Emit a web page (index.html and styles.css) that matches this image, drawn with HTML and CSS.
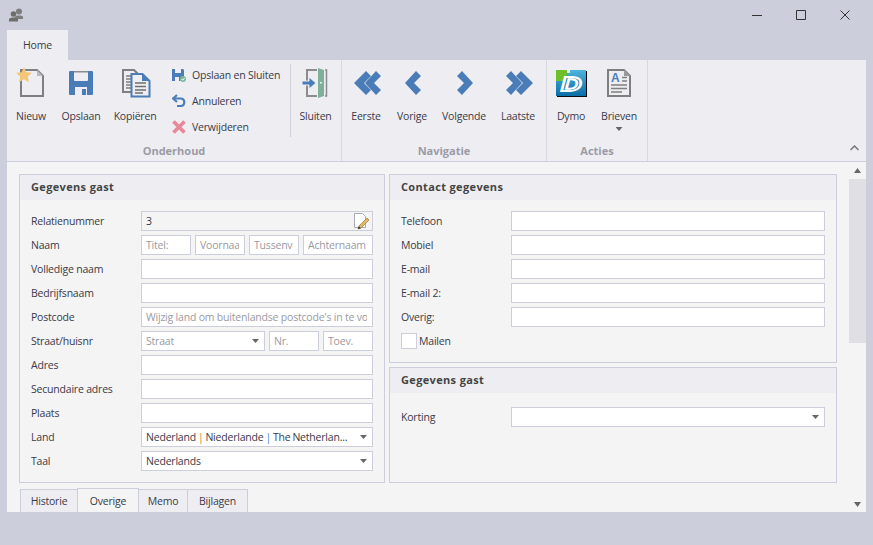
FILE: index.html
```html
<!DOCTYPE html>
<html lang="en">
<head>
  <meta charset="UTF-8" />
  <title>Gegevens gast</title>
  <link rel="stylesheet" href="styles.css">
</head>
<body>
<div class="window">

  <div class="titlebar">
    <svg class="app-icon" width="16" height="16" viewBox="0 0 16 16">
      <circle cx="11" cy="4.5" r="3" fill="#7d7d7d"/>
      <path d="M7 9.5c1-1.500 7-1.500 8 0v2.500H7z" fill="#7d7d7d"/>
      <circle cx="5.500" cy="7" r="2.800" fill="#6e6e6e"/>
      <path d="M1 12c1-2 8-2 9 0v2.500H1z" fill="#6e6e6e"/>
    </svg>
    <div class="win-controls">
      <button class="win-btn"><svg width="12" height="12" viewBox="0 0 12 12"><path d="M1 6.500h10" stroke="#333" fill="none"/></svg></button>
      <button class="win-btn"><svg width="12" height="12" viewBox="0 0 12 12"><path d="M1.500 1.500h9v9h-9z" stroke="#333" fill="none"/></svg></button>
      <button class="win-btn"><svg width="12" height="12" viewBox="0 0 12 12"><path d="M1.500 1.500l9 9M10.500 1.500l-9 9" stroke="#333" fill="none"/></svg></button>
    </div>
  </div>

  <div class="tabstrip">
    <div class="ribbon-tab">Home</div>
  </div>

  <div class="ribbon">
    <div class="group group-onderhoud">
      <div class="group-items">
        <div class="big-btn w48">
          <svg class="big-icon" width="32" height="32" viewBox="0 0 32 32">
            <path d="M6 3h16l6 6v20H6z" fill="#eeeef2" stroke="#7f7f7f" stroke-width="2"/>
            <path d="M22 3v6h6z" fill="#b9b9bf"/>
            <path d="M9 0l2.400 5.200 5.600.6-4.200 3.800 1.200 5.600-5-2.900-5 2.900 1.200-5.600L1 5.800l5.600-.6z" fill="#f3c777"/>
          </svg>
          <span>Nieuw</span>
        </div>
        <div class="big-btn w52">
          <svg class="big-icon" width="32" height="32" viewBox="0 0 32 32">
            <path d="M5 4h22a1 1 0 0 1 1 1v22a1 1 0 0 1-1 1H5a1 1 0 0 1-1-1V5a1 1 0 0 1 1-1z" fill="#4a7db8"/>
            <path d="M9 4h14v9a1 1 0 0 1-1 1H10a1 1 0 0 1-1-1z" fill="#eeeef2"/>
            <path d="M9 4h14v1.500H9z" fill="#8c8c8c"/>
            <path d="M10 20h12v8H10z" fill="#eeeef2"/>
            <path d="M17 22h4v6h-4z" fill="#4a7db8"/>
          </svg>
          <span>Opslaan</span>
        </div>
        <div class="big-btn w56">
          <svg class="big-icon" width="32" height="32" viewBox="0 0 32 32">
            <path d="M4 3h11l4 4v18H4z" fill="#eeeef2" stroke="#7f7f7f" stroke-width="2"/>
            <path d="M7 9h6M7 12h6M7 15h6M7 18h6M7 21h6" stroke="#7f7f7f" stroke-width="1.400"/>
            <path d="M12.500 7h11l7 7v15.500h-18z" fill="#eeeef2" stroke="#4a7db8" stroke-width="2"/>
            <path d="M23 6.500V14h7.500z" fill="#4a7db8"/>
            <path d="M16 16h11M16 19.500h11M16 23h11M16 26h8" stroke="#6f6f6f" stroke-width="1.500"/>
          </svg>
          <span>Kopiëren</span>
        </div>
        <div class="small-col">
          <div class="small-btn">
            <svg width="14" height="14" viewBox="0 0 14 14">
              <path d="M0 1h11l1 1v6.500L8 13H0z" fill="#4a7db8"/>
              <path d="M3 1h6v4H3zM3 9h4v4H3z" fill="#eeeef2"/>
              <circle cx="11" cy="11" r="3" fill="#7fb59b"/>
              <path d="M9.500 11l1.200 1.200 1.800-2" stroke="#fff" fill="none"/>
            </svg>
            <span>Opslaan en Sluiten</span>
          </div>
          <div class="small-btn">
            <svg width="14" height="14" viewBox="0 0 14 14">
              <path d="M5 1L1 4.500 5 8" fill="none" stroke="#4a7db8" stroke-width="2.200"/>
              <path d="M2 4.500h6.500c5 0 5 7.500 0 7.500H5" fill="none" stroke="#4a7db8" stroke-width="2.200"/>
            </svg>
            <span>Annuleren</span>
          </div>
          <div class="small-btn">
            <svg width="14" height="14" viewBox="0 0 14 14">
              <path d="M1.500 1.500l11 11M12.500 1.500l-11 11" stroke="#e8899b" stroke-width="3.800" fill="none"/>
            </svg>
            <span>Verwijderen</span>
          </div>
        </div>
        <div class="group-sep"></div>
        <div class="big-btn w49">
          <svg class="big-icon" width="32" height="32" viewBox="0 0 32 32">
            <path d="M17 3H7v26h10" fill="none" stroke="#8c8c8c" stroke-width="2"/>
            <path d="M25 3h1.500v26H25" fill="none" stroke="#8c8c8c" stroke-width="1.500"/>
            <path d="M18 1l6 2v26l-6 2z" fill="#7eb09a"/>
            <path d="M20 15h2v1.500h-2z" fill="#eeeef2"/>
            <path d="M2 14h7v-4l7 6-7 6v-4H2z" fill="#4a7db8" stroke="#eeeef2"/>
          </svg>
          <span>Sluiten</span>
        </div>
      </div>
      <div class="group-label">Onderhoud</div>
    </div>

    <div class="group group-navigatie">
      <div class="group-items">
        <div class="big-btn w48">
          <svg class="big-icon" width="32" height="32" viewBox="0 0 32 32">
            <path d="M4 16L16 4l5 5-7 7 7 7-5 5z" fill="#4a7db8"/>
            <path d="M15 16L26 4l5 5-7 7 7 7-5 5z" fill="#4a7db8"/>
          </svg>
          <span>Eerste</span>
        </div>
        <div class="big-btn w44">
          <svg class="big-icon" width="32" height="32" viewBox="0 0 32 32">
            <path d="M9 16L20 4l5 5-7 7 7 7-5 5z" fill="#4a7db8"/>
          </svg>
          <span>Vorige</span>
        </div>
        <div class="big-btn w60">
          <svg class="big-icon" width="32" height="32" viewBox="0 0 32 32">
            <path d="M25 16L14 4 9 9l7 7-7 7 5 5z" fill="#4a7db8"/>
          </svg>
          <span>Volgende</span>
        </div>
        <div class="big-btn w48">
          <svg class="big-icon" width="32" height="32" viewBox="0 0 32 32">
            <path d="M20 16L9 4 4 9l7 7-7 7 5 5z" fill="#4a7db8"/>
            <path d="M31 16L19 4l-5 5 7 7-7 7 5 5z" fill="#4a7db8"/>
          </svg>
          <span>Laatste</span>
        </div>
      </div>
      <div class="group-label">Navigatie</div>
    </div>

    <div class="group group-acties">
      <div class="group-items">
        <div class="big-btn w48">
          <svg class="big-icon" width="32" height="32" viewBox="0 0 32 32">
            <defs>
              <linearGradient id="dymoBlue" x1="0" y1="0" x2="0" y2="1">
                <stop offset="0" stop-color="#4db4dc"/>
                <stop offset="1" stop-color="#0a6ea8"/>
              </linearGradient>
            </defs>
            <path d="M2 4h30v26H2z" fill="#0b0b0b"/>
            <path d="M1 3h30v26H1z" fill="url(#dymoBlue)"/>
            <path d="M1 3h11v11H1z" fill="#6fbf2a"/>
            <path d="M12 3h3v3h-3z" fill="#eeeef2"/>
            <text class="dymo-d" transform="translate(16 24) scale(1.350 .95)">D</text>
          </svg>
          <span>Dymo</span>
        </div>
        <div class="big-btn w48">
          <svg class="big-icon" width="32" height="32" viewBox="0 0 32 32">
            <path d="M5 3h16l6 6v20H5z" fill="#eeeef2" stroke="#7f7f7f" stroke-width="2"/>
            <path d="M21 2.500V9h6.500z" fill="#9a9a9a"/>
            <text class="brief-a" x="8" y="15">A</text>
            <path d="M19 10.500h5M19 14h5M8 18h16M8 21.500h16M8 25h11" stroke="#7f7f7f" stroke-width="1.500"/>
          </svg>
          <span>Brieven</span>
          <i class="caret caret-brieven"></i>
        </div>
      </div>
      <div class="group-label">Acties</div>
    </div>

    <svg class="ribbon-collapse" width="9" height="6" viewBox="0 0 9 6">
      <path d="M.5 5L4.500 1l4 4" fill="none" stroke="#777" stroke-width="1.500"/>
    </svg>
  </div>

  <div class="content">
    <div class="main">
      <div class="panels">
        <div class="panel panel-gast">
          <div class="panel-head">Gegevens gast</div>
          <div class="form">
            <label>Relatienummer</label>
            <div class="field-icon">
              <input class="readonly" type="text" value="3" readonly>
              <svg class="edit-icon" width="16" height="17" viewBox="0 0 16 17">
                <path d="M.5.500h8l3 3v11H.5z" fill="#fff" stroke="#a9a9b5"/>
                <path d="M5 13l8-8 2 2-8 8-3 1z" fill="#e3b765" stroke="#8c6a2a" stroke-width=".6"/>
                <path d="M4 16l.8-2.800 2 2z" fill="#333"/>
              </svg>
            </div>
            <label>Naam</label>
            <div class="row-naam">
              <input type="text" placeholder="Titel:">
              <input type="text" placeholder="Voornaam">
              <input type="text" placeholder="Tussenvoegsel">
              <input type="text" placeholder="Achternaam">
            </div>
            <label>Volledige naam</label>
            <input type="text">
            <label>Bedrijfsnaam</label>
            <input type="text">
            <label>Postcode</label>
            <input type="text" placeholder="Wijzig land om buitenlandse postcode's in te voeren">
            <label>Straat/huisnr</label>
            <div class="row-straat">
              <div class="combo placeholder"><span class="combo-text">Straat</span><i class="caret"></i></div>
              <input type="text" placeholder="Nr.">
              <input type="text" placeholder="Toev.">
            </div>
            <label>Adres</label>
            <input type="text">
            <label>Secundaire adres</label>
            <input type="text">
            <label>Plaats</label>
            <input type="text">
            <label>Land</label>
            <div class="combo"><span class="combo-text">Nederland <b class="pipe-a">|</b> Niederlande <b class="pipe-b">|</b> The Netherlan...</span><i class="caret"></i></div>
            <label>Taal</label>
            <div class="combo"><span class="combo-text">Nederlands</span><i class="caret"></i></div>
          </div>
        </div>

        <div class="right-col">
          <div class="panel panel-contact">
            <div class="panel-head">Contact gegevens</div>
            <div class="form">
              <label>Telefoon</label>
              <input type="text">
              <label>Mobiel</label>
              <input type="text">
              <label>E-mail</label>
              <input type="text">
              <label>E-mail 2:</label>
              <input type="text">
              <label>Overig:</label>
              <input type="text">
              <div class="check-row"><i class="check"></i><span>Mailen</span></div>
            </div>
          </div>
          <div class="panel panel-korting">
            <div class="panel-head">Gegevens gast</div>
            <div class="form form-korting">
              <label>Korting</label>
              <div class="combo"><span class="combo-text"></span><i class="caret"></i></div>
            </div>
          </div>
        </div>
      </div>

      <div class="tabs">
        <div class="tab">Historie</div>
        <div class="tab active">Overige</div>
        <div class="tab">Memo</div>
        <div class="tab">Bijlagen</div>
      </div>
    </div>

    <div class="scrollbar">
      <i class="arrow-up"></i>
      <div class="thumb"></div>
      <i class="arrow-down"></i>
    </div>
  </div>

</div>
</body>
</html>
```

FILE: styles.css
```css
* {
  box-sizing: border-box;
}

body {
  margin: 0;
  font-family: "Open Sans", "Noto Sans", sans-serif;
  font-size: 10.5px;
  letter-spacing: -0.2px;
  color: #3a3a48;
}

.window {
  width: 873px;
  height: 545px;
  background-color: #cccedb;
  padding: 0 7px;
  overflow: hidden;
}

.titlebar {
  height: 30px;
  display: flex;
  align-items: center;
  justify-content: space-between;
  margin-right: -1px;
  padding-left: 1px;
  padding-bottom: 1px;
}

.app-icon {
  display: block;
}

.win-controls {
  display: flex;
}

.win-btn {
  width: 44px;
  height: 30px;
  padding: 0;
  background: none;
  border: none;
  display: flex;
  align-items: center;
  justify-content: center;
}

.tabstrip {
  height: 30px;
  display: flex;
}

.ribbon-tab {
  width: 61px;
  background-color: #eeeef2;
  text-align: center;
  line-height: 30px;
}

.ribbon {
  position: relative;
  height: 102px;
  background-color: #eeeef2;
  border-bottom: 1px solid #cccedb;
  display: flex;
}

.group {
  display: flex;
  flex-direction: column;
  border-right: 1px solid #d7d8e2;
}

.group-onderhoud {
  width: 335px;
}

.group-navigatie {
  width: 205px;
}

.group-acties {
  width: 101px;
}

.group-items {
  height: 83px;
  display: flex;
}

.group-label {
  height: 18px;
  text-align: center;
  font-size: 11px;
  font-weight: bold;
  letter-spacing: 0;
  color: #9a9ba6;
  line-height: 16px;
}

.big-btn {
  position: relative;
  display: flex;
  flex-direction: column;
  align-items: center;
  padding-top: 7px;
  white-space: nowrap;
}

.big-icon {
  display: block;
  margin-bottom: 9px;
}

.big-btn span {
  line-height: 16px;
}

.w44 { width: 44px; }
.w48 { width: 48px; }
.w49 { width: 49px; }
.w52 { width: 52px; }
.w56 { width: 56px; }
.w60 { width: 60px; }

.small-col {
  width: 127px;
  padding-top: 2px;
  padding-left: 9px;
}

.small-btn {
  height: 26px;
  display: flex;
  align-items: center;
  gap: 6px;
  white-space: nowrap;
}

.group-sep {
  width: 1px;
  height: 73px;
  margin-top: 4px;
  background-color: #d0d1dc;
}

.ribbon-collapse {
  position: absolute;
  right: 7px;
  bottom: 10px;
}

.dymo-d {
  font-family: "Liberation Sans", sans-serif;
  font-size: 21px;
  font-weight: bold;
  font-style: italic;
  text-anchor: middle;
  fill: #1577b0;
  stroke: #fff;
  stroke-width: 2px;
}

.brief-a {
  font-family: "Liberation Sans", sans-serif;
  font-size: 12px;
  font-weight: bold;
  fill: #4a7db8;
}

.caret {
  display: block;
  flex: none;
  width: 7px;
  height: 4px;
  background-color: #666;
  clip-path: polygon(0 0, 100% 0, 50% 100%);
}

.caret-brieven {
  margin-top: 3px;
}

.content {
  height: 350px;
  background-color: #f4f4f4;
  display: flex;
  overflow: hidden;
}

.main {
  width: 842px;
  padding: 12px 11px 0 12px;
}

.panels {
  display: grid;
  grid-template-columns: 366px 448px;
  gap: 4px;
}

.panel {
  border: 1px solid #cccedb;
}

.panel-gast {
  height: 309px;
}

.right-col {
  display: flex;
  flex-direction: column;
  gap: 4px;
}

.panel-contact {
  height: 189px;
}

.panel-korting {
  height: 116px;
}

.panel-head {
  height: 25px;
  background-color: #eeeef2;
  padding-left: 11px;
  font-size: 11px;
  font-weight: bold;
  letter-spacing: 0.35px;
  line-height: 24px;
  color: #444;
}

.form {
  display: grid;
  grid-template-columns: 110px 1fr;
  grid-auto-rows: 20px;
  row-gap: 4px;
  padding: 11px 11px 0;
  align-items: center;
}

.form-korting {
  padding-top: 14px;
}

.form label {
  white-space: nowrap;
}

input,
.combo {
  width: 100%;
  height: 20px;
  min-width: 0;
  background-color: #fff;
  border: 1px solid #cccedb;
  border-radius: 0;
  padding: 0 5px 0 4px;
  margin: 0;
  font-family: inherit;
  font-size: 10.5px;
  letter-spacing: -0.2px;
  color: #3a3a48;
  outline: none;
}

input::placeholder,
.placeholder {
  color: #9a9a9f;
  opacity: 1;
}

input.readonly {
  background-color: #f4f4f4;
}

.field-icon {
  position: relative;
}

.edit-icon {
  position: absolute;
  right: 3px;
  top: 2px;
}

.row-naam {
  display: grid;
  grid-template-columns: 50px 50px 50px 70px;
  gap: 4px;
}

.row-straat {
  display: grid;
  grid-template-columns: 124px 50px 50px;
  gap: 4px;
}

.combo {
  display: flex;
  align-items: center;
  justify-content: space-between;
}

.combo-text {
  white-space: nowrap;
  overflow: hidden;
  word-spacing: -0.6px;
}

.pipe-a {
  font-weight: normal;
  color: #c9822f;
}

.pipe-b {
  font-weight: normal;
  color: #4a88c7;
}

.check-row {
  grid-column: 1 / 3;
  display: flex;
  align-items: center;
  gap: 2px;
}

.check {
  display: block;
  width: 16px;
  height: 16px;
  background-color: #fff;
  border: 1px solid #cccedb;
}

.tabs {
  display: grid;
  grid-template-columns: 57px 61px 49px 60px;
  margin-top: 5px;
  padding-left: 1px;
}

.tab {
  width: calc(100% + 1px);
  height: 26px;
  margin-top: 1px;
  background-color: #eeeef2;
  border: 1px solid #cccedb;
  text-align: center;
  line-height: 23px;
}

.tab.active {
  margin-top: 0;
  height: 27px;
  background-color: #f4f4f4;
  line-height: 25px;
  position: relative;
}

.scrollbar {
  width: 17px;
  display: flex;
  flex-direction: column;
  align-items: center;
}

.arrow-up,
.arrow-down {
  display: block;
  width: 7px;
  height: 5px;
  background-color: #666;
}

.arrow-up {
  margin-top: 6px;
  clip-path: polygon(50% 0, 100% 100%, 0 100%);
}

.thumb {
  width: 17px;
  height: 164px;
  margin-top: 6px;
  background-color: #dfdfe4;
}

.arrow-down {
  margin-top: 159px;
  clip-path: polygon(0 0, 100% 0, 50% 100%);
}
```
